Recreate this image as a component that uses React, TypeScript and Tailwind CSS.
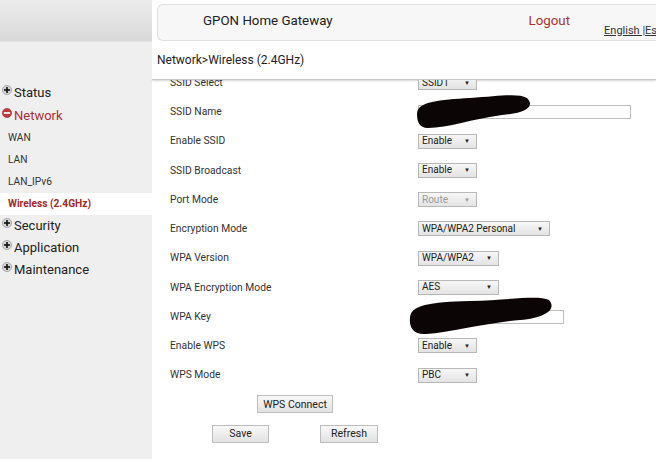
import React from "react";

const font = { fontFamily: "Roboto, 'Liberation Sans', sans-serif" };

function PlusIcon({ open }: { open?: boolean }) {
  if (open) {
    return (
      <svg width="10" height="10" viewBox="0 0 10 10" className="mt-[-5px] shrink-0">
        <circle cx="5" cy="5" r="4.6" fill="#c0393b" stroke="#8e2a2a" strokeWidth="0.6" />
        <rect x="1.8" y="4.1" width="6.4" height="1.8" fill="#fff" />
      </svg>
    );
  }
  return (
    <svg width="10" height="10" viewBox="0 0 10 10" className="mt-[-5px] shrink-0">
      <circle cx="5" cy="5" r="4.6" fill="#d4d4d4" stroke="#8a8a8a" strokeWidth="0.6" />
      <rect x="2" y="4.2" width="6" height="1.6" fill="#111" />
      <rect x="4.2" y="2" width="1.6" height="6" fill="#111" />
    </svg>
  );
}

function Select({ value, width, disabled }: { value: string; width: string; disabled?: boolean }) {
  return (
    <div
      className={`flex h-[15px] items-center justify-between border border-[#b8b8b8] bg-gradient-to-b from-[#f7f7f7] to-[#e3e3e3] pl-[3px] pr-[6px] text-[10px] leading-none ${width} ${
        disabled ? "text-[#9a9a9a]" : "text-[#222]"
      }`}
    >
      <span>{value}</span>
      <span className={`text-[6px] ${disabled ? "text-[#999]" : "text-[#222]"}`}>▼</span>
    </div>
  );
}

function Row({ label, children }: { label: string; children?: React.ReactNode }) {
  return (
    <div className="flex h-[29.25px] items-center">
      <div className="w-[266px] shrink-0 pl-[18px] text-[10.3px] text-[#333]">{label}</div>
      <div className="flex items-center">{children}</div>
    </div>
  );
}

function Btn({ label, width }: { label: string; width: string }) {
  return (
    <div
      className={`flex h-[18px] items-center justify-center border border-[#bdbdbd] bg-gradient-to-b from-[#f8f8f8] to-[#e2e2e2] text-[10.5px] text-[#222] ${width}`}
    >
      {label}
    </div>
  );
}

function MenuItem({ label, open, h }: { label: string; open?: boolean; h: string }) {
  return (
    <div
      className={`flex ${h} items-center gap-[2px] pl-[2px] text-[13px] ${open ? "text-[#a83232]" : "text-[#222]"}`}
    >
      <PlusIcon open={open} />
      <span>{label}</span>
    </div>
  );
}

export default function App() {
  return (
    <div className="relative flex h-[459px] w-[656px] overflow-hidden bg-white" style={font}>
      {/* Sidebar */}
      <div className="flex w-[152px] shrink-0 flex-col bg-[#efefef]">
        <div className="h-[42px] border-b border-[#e4e4e4] bg-gradient-to-b from-[#ececec] to-[#d9d9d9]" />
        <div className="h-[39px]" />
        <MenuItem label="Status" h="h-[23px]" />
        <MenuItem label="Network" open h="h-[23px]" />
        <div className="flex h-[22px] items-center pl-[8px] text-[10.2px] text-[#333]">WAN</div>
        <div className="flex h-[22px] items-center pl-[8px] text-[10.2px] text-[#333]">LAN</div>
        <div className="flex h-[22px] items-center pl-[8px] text-[10.2px] text-[#333]">LAN_IPv6</div>
        <div className="flex h-[22px] items-center bg-white pl-[8px] text-[10.2px] font-bold text-[#9e2a2b]">
          Wireless (2.4GHz)
        </div>
        <MenuItem label="Security" h="h-[21.5px]" />
        <MenuItem label="Application" h="h-[22px]" />
        <MenuItem label="Maintenance" h="h-[22px]" />
      </div>

      {/* Main */}
      <div className="flex min-w-0 flex-1 flex-col">
        <div className="pl-[5px] pt-[4px]">
          <div className="flex h-[37px] items-stretch overflow-hidden whitespace-nowrap rounded-l-[6px] border border-r-0 border-[#e0e0e0] bg-[#f7f7f7]">
            <span className="ml-[45px] self-center pb-[4px] text-[13.3px] text-[#222]">GPON Home Gateway</span>
            <span className="ml-[196px] self-center pb-[3px] text-[13.3px] text-[#a83232]">Logout</span>
            <span className="ml-[34px] self-end pb-[1px] text-[11px] text-[#333] underline">English |Esp</span>
          </div>
        </div>
        <div className="flex h-[38px] items-center pl-[5px] text-[12px] text-[#222]">Network&gt;Wireless (2.4GHz)</div>
        <div className="h-[1px] bg-[#c8c8c8] shadow-[0_1px_2px_rgba(0,0,0,0.25)]" />
        <div className="min-h-0 flex-1 overflow-hidden">
          <div className="mt-[-12px]">
            <Row label="SSID Select">
              <Select value="SSID1" width="w-[59px]" />
            </Row>
            <Row label="SSID Name">
              <div className="h-[14px] w-[213px] border border-[#bdbdbd] bg-white" />
            </Row>
            <Row label="Enable SSID">
              <Select value="Enable" width="w-[59px]" />
            </Row>
            <Row label="SSID Broadcast">
              <Select value="Enable" width="w-[59px]" />
            </Row>
            <Row label="Port Mode">
              <Select value="Route" width="w-[59px]" disabled />
            </Row>
            <Row label="Encryption Mode">
              <Select value="WPA/WPA2 Personal" width="w-[132px]" />
            </Row>
            <Row label="WPA Version">
              <Select value="WPA/WPA2" width="w-[81px]" />
            </Row>
            <Row label="WPA Encryption Mode">
              <Select value="AES" width="w-[81px]" />
            </Row>
            <Row label="WPA Key">
              <div className="h-[14px] w-[146px] border border-[#bdbdbd] bg-white" />
            </Row>
            <Row label="Enable WPS">
              <Select value="Enable" width="w-[59px]" />
            </Row>
            <Row label="WPS Mode">
              <Select value="PBC" width="w-[59px]" />
            </Row>
            <div className="flex h-[29.25px] w-[286px] items-center justify-center">
              <Btn label="WPS Connect" width="w-[76px]" />
            </div>
            <div className="flex h-[29.25px] w-[286px] items-center justify-center gap-[51px]">
              <Btn label="Save" width="w-[57px]" />
              <Btn label="Refresh" width="w-[58px]" />
            </div>
          </div>
        </div>
      </div>

      {/* Redaction scribbles */}
      <svg className="pointer-events-none absolute left-0 top-0" width="656" height="459" viewBox="0 0 656 459">
        <path
          d="M417,114 C417,101 440,100 470,98 C500,96 518,93 527,98 C535,106 527,113 502,115 C472,119 448,128 428,128 C419,128 417,121 417,114 Z"
          fill="#0b0505"
        />
        <path
          d="M410,318 C410,305 430,302 470,301 C510,300 538,295 549,300 C557,309 546,318 520,320 C490,322 452,332 426,334 C413,335 409,327 410,318 Z"
          fill="#0b0505"
        />
      </svg>
    </div>
  );
}
